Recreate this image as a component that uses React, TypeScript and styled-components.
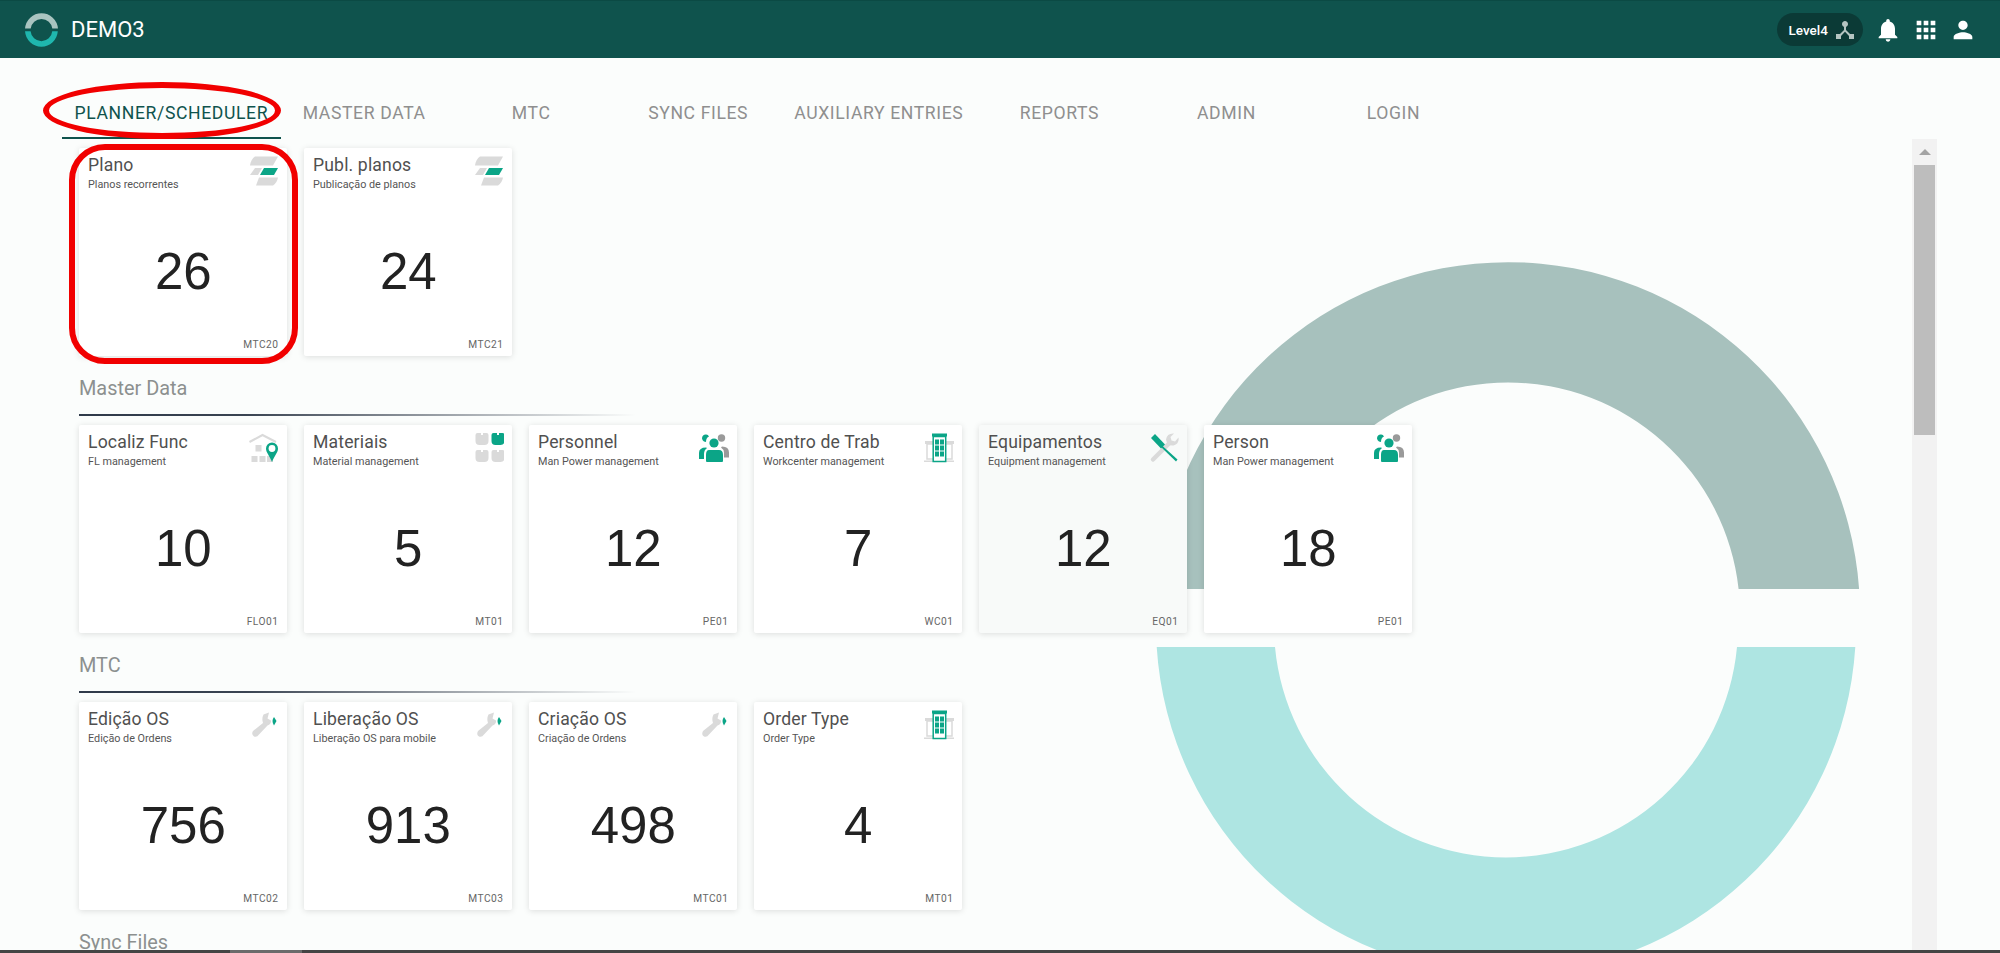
import React from "react";
import styled, { createGlobalStyle } from "styled-components";
import { MdApps, MdDeviceHub, MdNotifications, MdPerson } from "react-icons/md";

const GREEN = "#0ba587";
const GRAY = "#dadada";

const GlobalStyle = createGlobalStyle`
  html, body {
    margin: 0;
    height: 100%;
    overflow: hidden;
    background: #fbfdfc;
    font-family: Roboto, "Liberation Sans", sans-serif;
  }
`;

type IconKind = "plan" | "place" | "material" | "people" | "building" | "tools" | "wrench";

interface CardData {
  title: string;
  subtitle: string;
  value: number;
  code: string;
  icon: IconKind;
  muted?: boolean;
}

const TABS = [
  "Planner/Scheduler",
  "Master Data",
  "MTC",
  "Sync Files",
  "Auxiliary Entries",
  "Reports",
  "Admin",
  "Login",
];

const PLANNER: CardData[] = [
  { title: "Plano", subtitle: "Planos recorrentes", value: 26, code: "MTC20", icon: "plan" },
  { title: "Publ. planos", subtitle: "Publicação de planos", value: 24, code: "MTC21", icon: "plan" },
];

const MASTER: CardData[] = [
  { title: "Localiz Func", subtitle: "FL management", value: 10, code: "FLO01", icon: "place" },
  { title: "Materiais", subtitle: "Material management", value: 5, code: "MT01", icon: "material" },
  { title: "Personnel", subtitle: "Man Power management", value: 12, code: "PE01", icon: "people" },
  { title: "Centro de Trab", subtitle: "Workcenter management", value: 7, code: "WC01", icon: "building" },
  { title: "Equipamentos", subtitle: "Equipment management", value: 12, code: "EQ01", icon: "tools", muted: true },
  { title: "Person", subtitle: "Man Power management", value: 18, code: "PE01", icon: "people" },
];

const MTC: CardData[] = [
  { title: "Edição OS", subtitle: "Edição de Ordens", value: 756, code: "MTC02", icon: "wrench" },
  { title: "Liberação OS", subtitle: "Liberação OS para mobile", value: 913, code: "MTC03", icon: "wrench" },
  { title: "Criação OS", subtitle: "Criação de Ordens", value: 498, code: "MTC01", icon: "wrench" },
  { title: "Order Type", subtitle: "Order Type", value: 4, code: "MT01", icon: "building" },
];

// tile with the little notch on top, used four times in the material icon
const tile = (x: number, y: number) =>
  `M${x + 2} ${y}h3.5v2h2v-2h3.5q2 0 2 2v6q0 4-4 4h-5q-4 0-4-4v-6q0-2 2-2z`;

function CardIcon({ kind }: { kind: IconKind }) {
  switch (kind) {
    case "plan":
      return (
        <svg width="30" height="30" viewBox="0 0 30 30">
          <path d="M6 0.5H29L24 9.5H1Q2 3 6 0.5Z" fill={GRAY} />
          <path d="M6 12H13L9 19H1Z" fill={GRAY} />
          <path d="M15 12H29L25 19H11Z" fill={GREEN} />
          <path d="M10 21.5H29Q28 27 24 29.5H7Z" fill={GRAY} />
        </svg>
      );
    case "place":
      return (
        <svg width="30" height="30" viewBox="0 0 30 30">
          <path d="M0.5 9L13.5 2L27 9" fill="none" stroke={GRAY} strokeWidth="2" />
          <rect x="6.5" y="12" width="6" height="6.5" fill={GRAY} />
          <rect x="2.5" y="23" width="6" height="6" fill={GRAY} />
          <rect x="10.5" y="23" width="6" height="6" fill={GRAY} />
          <rect x="18" y="23" width="6" height="6" fill={GRAY} />
          <path
            d="M23 9.5a6 6 0 0 1 6 6c0 4-3.5 7-6 13.500c-2.500-6.500-6-9.500-6-13.500a6 6 0 0 1 6-6z"
            fill={GREEN}
          />
          <circle cx="23" cy="15.500" r="3.400" fill="#fff" />
        </svg>
      );
    case "material":
      return (
        <svg width="30" height="30" viewBox="0 0 30 30">
          <path d={tile(1.5, 0)} fill={GRAY} />
          <path d={tile(17.5, 0)} fill={GREEN} />
          <path d={tile(1.5, 17)} fill={GRAY} />
          <path d={tile(17.5, 17)} fill={GRAY} />
        </svg>
      );
    case "people":
      return (
        <svg width="30" height="30" viewBox="0 0 30 30">
          <circle cx="22.500" cy="5" r="3.700" fill="#9a9a9a" />
          <path d="M23 13.500q7 0 7 6v5h-5v-5q0-3-3-5z" fill="#9a9a9a" />
          <path d="M5 8.500a3.700 3.700 0 1 1 5-5q-3 1-3 5.500z" fill={GREEN} />
          <path d="M7 14.500q-7 0-7 5.500v6h5v-5q0-4 3-6z" fill={GREEN} />
          <circle cx="15" cy="10" r="4.600" fill={GREEN} />
          <path d="M10 17h10q4 0 4 5v6q0 1-1 1H8q-1 0-1-1v-6q0-5 3-5z" fill={GREEN} />
        </svg>
      );
    case "building":
      return (
        <svg width="30" height="30" viewBox="0 0 30 30">
          <rect x="1" y="8" width="29" height="3" fill={GRAY} />
          <rect x="3" y="11" width="25" height="15" fill="none" stroke={GRAY} strokeWidth="1.500" />
          <rect x="0" y="27.500" width="30" height="1.500" fill={GRAY} />
          <rect x="8" y="0.500" width="15" height="3" fill={GREEN} />
          <rect x="9.200" y="3.500" width="12.500" height="25" fill="#fff" stroke={GREEN} strokeWidth="1.500" />
          {[6.5, 12.5, 18.5].map((y) => (
            <React.Fragment key={y}>
              <rect x="11" y={y} width="4" height="5" fill={GREEN} />
              <rect x="16" y={y} width="4" height="5" fill={GREEN} />
            </React.Fragment>
          ))}
        </svg>
      );
    case "tools":
      return (
        <svg width="30" height="30" viewBox="0 0 30 30">
          <path
            d="M4 26.500L20 10.500"
            fill="none"
            stroke={GRAY}
            strokeWidth="4.500"
            strokeLinecap="round"
          />
          <path d="M29.500 4.500L26 8.500L22.500 7.500L21.500 4L25 0.500Q18 0 17 6.500Q18 13 24.500 12.500Q30.500 11 29.500 4.500Z" fill={GRAY} />
          <path d="M2 5L6 1L16 11.500L12 15.500Z" fill={GREEN} />
          <path d="M13 12.500L28.500 26.500L27 28.500L12 14Z" fill={GREEN} />
        </svg>
      );
    default:
      return (
        <svg width="30" height="30" viewBox="0 0 30 30">
          <path
            d="M20 2.500L14.500 4.500Q12.500 8.500 14 13L4 21Q2 24.500 5 26.500Q8 27.500 10 24.500L18.500 15.500Q22.500 14 22 10.500L18.500 8.500Z"
            fill={GRAY}
          />
          <path d="M25 7L27.500 11L25 15.500Q22 11 25 7Z" fill={GREEN} />
        </svg>
      );
  }
}

// same two arcs serve as the small logo and the big backdrop
function RingMark({ top, bottom, className }: { top: string; bottom: string; className?: string }) {
  return (
    <svg className={className} viewBox="1156 262 704 714">
      <path
        d="M1156.900 589A352 352 0 0 1 1859.100 589L1738.600 589A232 232 0 0 0 1277.400 589Z"
        fill={top}
      />
      <path
        d="M1156.700 647A350 350 0 0 0 1855.300 647L1737 647A232 232 0 0 1 1275 647Z"
        fill={bottom}
      />
    </svg>
  );
}

function Tile({ card }: { card: CardData }) {
  return (
    <Card $muted={card.muted}>
      <CardHead>
        <div>
          <CardTitle>{card.title}</CardTitle>
          <CardSubtitle>{card.subtitle}</CardSubtitle>
        </div>
        <CardIcon kind={card.icon} />
      </CardHead>
      <CardValue>{card.value}</CardValue>
      <CardCode>{card.code}</CardCode>
    </Card>
  );
}

export default function App() {
  return (
    <Page>
      <GlobalStyle />
      <Backdrop top="#a7c1bd" bottom="#aee5e2" />
      <AppBar>
        <Brand>
          <Logo top="#a9c4c0" bottom="#1fb7ae" />
          <BrandName>DEMO3</BrandName>
        </Brand>
        <BarActions>
          <LevelChip>
            Level4
            <MdDeviceHub size={24} color="#b4c4c1" />
          </LevelChip>
          <MdNotifications size={28} />
          <MdApps size={28} />
          <MdPerson size={28} />
        </BarActions>
      </AppBar>
      <TabBar>
        {TABS.map((tab, i) => (
          <Tab key={tab} $active={i === 0}>
            {tab}
          </Tab>
        ))}
      </TabBar>
      <Body>
        <Content>
          <CardRow>
            {PLANNER.map((c) => (
              <Tile key={c.code} card={c} />
            ))}
          </CardRow>
          <SectionTitle>Master Data</SectionTitle>
          <SectionRule />
          <CardRow>
            {MASTER.map((c) => (
              <Tile key={c.title} card={c} />
            ))}
          </CardRow>
          <SectionTitle>MTC</SectionTitle>
          <SectionRule />
          <CardRow>
            {MTC.map((c) => (
              <Tile key={c.title} card={c} />
            ))}
          </CardRow>
          <SectionTitle>Sync Files</SectionTitle>
        </Content>
        <ScrollRail>
          <ScrollArrow />
          <ScrollThumb />
        </ScrollRail>
      </Body>
      <BottomStrip>
        <BottomSegment />
      </BottomStrip>
      {/* annotations drawn on top of the screenshot */}
      <TabMarker />
      <CardMarker />
    </Page>
  );
}

const Page = styled.div`
  position: relative;
  width: 2000px;
  height: 953px;
  overflow: hidden;
  display: flex;
  flex-direction: column;
`;

const Backdrop = styled(RingMark)`
  position: absolute;
  left: 1156px;
  top: 262px;
  width: 704px;
  height: 714px;
`;

const AppBar = styled.header`
  position: relative;
  flex: none;
  height: 58px;
  box-sizing: border-box;
  border-top: 1px solid #0b4a44;
  background: #0f534d;
  color: #fff;
  display: flex;
  align-items: center;
  justify-content: space-between;
  padding: 0 23px 0 25px;
`;

const Brand = styled.div`
  display: flex;
  align-items: center;
  gap: 13px;
`;

const Logo = styled(RingMark)`
  width: 33px;
  height: 34px;
`;

const BrandName = styled.span`
  font-size: 22px;
`;

const BarActions = styled.div`
  display: flex;
  align-items: center;
  gap: 9.5px;
`;

const LevelChip = styled.div`
  display: flex;
  align-items: center;
  gap: 5px;
  height: 33px;
  width: 86px;
  box-sizing: border-box;
  margin-right: 2px;
  padding-left: 12px;
  border-radius: 17px;
  background: #0b3a36;
  font-size: 13.5px;
  font-weight: 500;
`;

const TabBar = styled.nav`
  position: relative;
  flex: none;
  display: flex;
  padding: 30px 0 0 62px;
`;

const Tab = styled.div<{ $active?: boolean }>`
  min-width: 167px;
  height: 51px;
  box-sizing: border-box;
  padding: 0 12.5px;
  display: flex;
  align-items: center;
  justify-content: center;
  font-size: 17.6px;
  letter-spacing: 0.62px;
  text-transform: uppercase;
  white-space: nowrap;
  color: ${(p) => (p.$active ? "#0f534d" : "#8f8f8f")};
  border-bottom: 2px solid ${(p) => (p.$active ? "#0f534d" : "transparent")};
`;

const Body = styled.main`
  position: relative;
  flex: 1;
  min-height: 0;
  display: flex;
  padding-right: 63px;
`;

const Content = styled.div`
  flex: 1;
  min-width: 0;
  padding: 9px 0 0 79px;
  overflow: hidden;
`;

const CardRow = styled.div`
  display: flex;
  gap: 17px;
`;

const SectionTitle = styled.h2`
  margin: 21px 0 0;
  height: 24px;
  line-height: 24px;
  font-size: 19.9px;
  font-weight: 400;
  color: #8c908f;
`;

const SectionRule = styled.div`
  width: 557px;
  height: 2px;
  margin: 13px 0 9px;
  background: linear-gradient(90deg, #2f3a4a 0%, #3a4452 30%, rgba(47, 58, 74, 0) 100%);
`;

const Card = styled.article<{ $muted?: boolean }>`
  width: 208px;
  height: 208px;
  box-sizing: border-box;
  padding: 8px 8.5px 5px 9px;
  border-radius: 2px;
  background: ${(p) => (p.$muted ? "#f8faf9" : "#fff")};
  box-shadow: 0 1px 6px rgba(0, 0, 0, 0.13);
  display: flex;
  flex-direction: column;
`;

const CardHead = styled.div`
  display: flex;
  justify-content: space-between;
  align-items: flex-start;
  flex: none;
`;

const CardTitle = styled.div`
  font-size: 17.6px;
  line-height: 18px;
  letter-spacing: 0.15px;
  color: #505050;
`;

const CardSubtitle = styled.div`
  margin-top: 4px;
  font-size: 10.8px;
  line-height: 14px;
  color: #555;
`;

const CardValue = styled.div`
  flex: 1;
  display: flex;
  align-items: center;
  justify-content: center;
  padding-top: 12px;
  font-family: "Liberation Sans", Arial, sans-serif;
  font-size: 51px;
  color: #222;
`;

const CardCode = styled.div`
  flex: none;
  text-align: right;
  font-size: 10.2px;
  line-height: 12px;
  letter-spacing: 0.5px;
  color: #666;
`;

const ScrollRail = styled.div`
  flex: none;
  width: 25px;
  background: #f2f2f2;
  display: flex;
  flex-direction: column;
  align-items: center;
`;

const ScrollArrow = styled.div`
  flex: none;
  height: 26px;
  width: 100%;
  display: flex;
  align-items: center;
  justify-content: center;
  &::after {
    content: "";
    border-left: 6px solid transparent;
    border-right: 6px solid transparent;
    border-bottom: 6px solid #a3a3a3;
  }
`;

const ScrollThumb = styled.div`
  flex: none;
  width: 21px;
  height: 270px;
  background: #bdbdbd;
`;

const BottomStrip = styled.div`
  position: relative;
  flex: none;
  height: 3px;
  padding-left: 230px;
  background: #444;
`;

const BottomSegment = styled.div`
  width: 72px;
  height: 3px;
  background: #6b6b6b;
`;

const TabMarker = styled.div`
  position: absolute;
  left: 43px;
  top: 82px;
  width: 238px;
  height: 57px;
  box-sizing: border-box;
  border: 6px solid #f10000;
  border-radius: 50%;
`;

const CardMarker = styled.div`
  position: absolute;
  left: 69px;
  top: 144px;
  width: 229px;
  height: 220px;
  box-sizing: border-box;
  border: 6px solid #f10000;
  border-radius: 36px;
`;
